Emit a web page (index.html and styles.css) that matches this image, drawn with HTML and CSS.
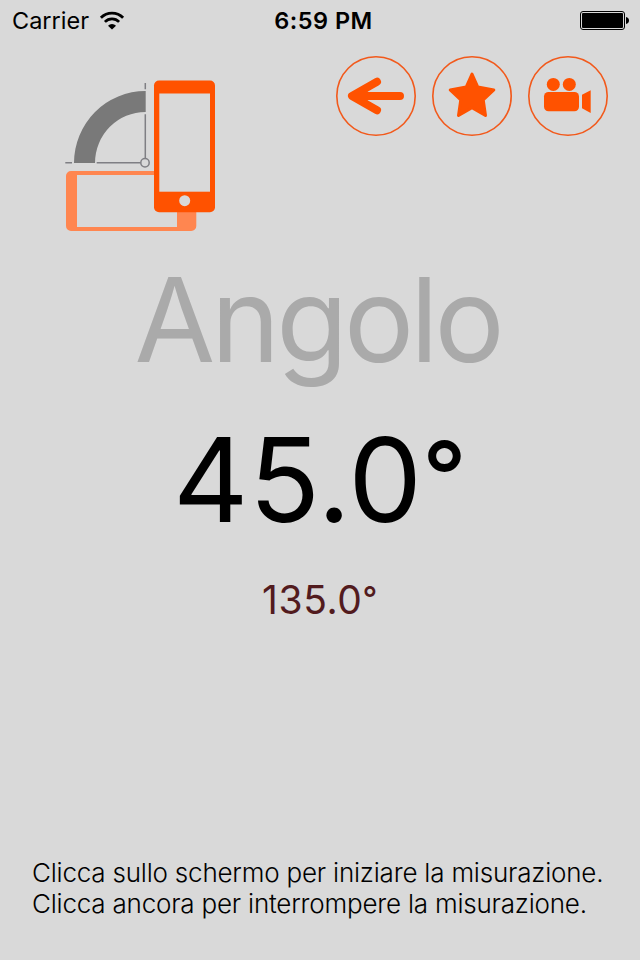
FILE: index.html
```html
<!DOCTYPE html>
<html lang="it">
<head>
    <meta charset="UTF-8">
    <meta name="viewport" content="width=device-width, initial-scale=1.0">
    <title>Angolo</title>
    <link rel="stylesheet" href="styles.css">
</head>
<body>
<div id="screen">
    <div class="status-bar">
        <div class="carrier">
            <span>Carrier</span>
            <svg class="wifi" width="26" height="20" viewBox="0 0 26 20">
                <path d="M1.9 6.8a15.6 15.6 0 0 1 22.2 0" fill="none" stroke="#000" stroke-width="2.8"/>
                <path d="M5.9 10.9a10 10 0 0 1 14.2 0" fill="none" stroke="#000" stroke-width="2.7"/>
                <path d="M13 18.6L9 14.7a5.6 5.6 0 0 1 8 0z"/>
            </svg>
        </div>
        <span class="time">6:59 PM</span>
        <svg class="battery" width="50" height="20" viewBox="0 0 50 20">
            <rect x="0.5" y="1.5" width="44" height="18" rx="2.5" fill="none" stroke="#000"/>
            <rect x="2" y="3" width="41" height="15" rx="1"/>
            <path d="M46 7c2 .3 3 1.6 3 3.5s-1 3.2-3 3.5z"/>
        </svg>
    </div>

    <div class="header">
        <svg class="logo" width="152" height="152" viewBox="0 0 152 152">
            <g fill="none" stroke="#7f7f84" stroke-width="1.5">
                <path d="M81.3 3v6.3M81.3 34.3v44M1.3 82.7H8M32.7 82.7h44"/>
                <circle cx="81" cy="82.8" r="4.2"/>
            </g>
            <path d="M10 83a71.5 72 0 0 1 71.7-72v21A50.5 51 0 0 0 31 83z" fill="#797979"/>
            <path d="M7 91h120a5 5 0 0 1 5.3 5v50a5 5 0 0 1-5 5H7a5 5 0 0 1-5-5V96a5 5 0 0 1 5-5zM13 95v52h100V95z" fill="#ff8650" fill-rule="evenodd"/>
            <rect x="90" y="0.5" width="61" height="131.7" rx="5" fill="#ff5200"/>
            <rect x="95.3" y="13.5" width="50.7" height="98.2" fill="#d9d9d9"/>
            <circle cx="120.7" cy="120.7" r="5.5" fill="#d9d9d9"/>
        </svg>

        <div class="buttons">
            <button type="button" aria-label="Indietro">
                <svg width="80" height="80" viewBox="0 0 80 80">
                    <circle class="ring" cx="40" cy="40" r="39.2"/>
                    <path d="M41 25.8L16 40l25 14.2M18 40h46M20 40l8-3v6z" fill="none" stroke="#ff5200" stroke-width="8" stroke-linecap="round" stroke-linejoin="round"/>
                </svg>
            </button>
            <button type="button" aria-label="Preferiti">
                <svg width="80" height="80" viewBox="0 0 80 80">
                    <circle class="ring" cx="40" cy="40" r="39.2"/>
                    <path d="M40 18l5.8 13 16 3-10.6 9.8 2.3 15.7L40 51.7l-13.5 7.8 2.3-15.7L18.2 34l16-3z" fill="#ff5200" stroke="#ff5200" stroke-width="3" stroke-linejoin="round"/>
                </svg>
            </button>
            <button type="button" aria-label="Video">
                <svg width="80" height="80" viewBox="0 0 80 80">
                    <circle class="ring" cx="40" cy="40" r="39.2"/>
                    <g fill="#ff5200">
                        <circle cx="25.3" cy="28.4" r="6.5"/>
                        <circle cx="41.3" cy="28.4" r="6.5"/>
                        <rect x="16" y="36" width="35" height="19.3" rx="4.5"/>
                        <path d="M54 38.8l8.7-4.5V57L54 52.3z"/>
                    </g>
                </svg>
            </button>
        </div>
    </div>

    <div class="measure">
        <h1>Angolo</h1>
        <div class="value">45.0<span class="deg">°</span></div>
        <div class="supplement">135.0<span class="deg">°</span></div>
    </div>

    <p class="hint">
        <span>Clicca sullo schermo per iniziare la misurazione.</span>
        <span>Clicca ancora per interrompere la misurazione.</span>
    </p>
</div>
</body>
</html>
```
FILE: styles.css
```css
body {
    margin: 0;
    background: #d9d9d9;
    font-family: Inter, "Liberation Sans", sans-serif;
    color: #000;
}

#screen {
    display: flex;
    flex-direction: column;
    box-sizing: border-box;
    width: 640px;
    height: 960px;
    padding-bottom: 41px;
    overflow: hidden;
}

.status-bar {
    display: grid;
    grid-template-columns: 1fr auto 1fr;
    align-items: center;
    height: 40px;
    padding: 1px 10px 0 12px;
    box-sizing: border-box;
    font-size: 23.5px;
    line-height: 40px;
}

.carrier {
    display: flex;
    align-items: center;
    gap: 10px;
}

.time {
    margin-left: 5px;
    font-weight: 600;
    font-size: 23.5px;
    letter-spacing: 0.5px;
}

.battery {
    justify-self: end;
    margin-top: -3px;
}

.header {
    display: flex;
    justify-content: space-between;
    align-items: flex-start;
    padding: 16px 32px 0 64px;
}

.logo {
    margin-top: 24px;
}

.buttons {
    display: flex;
    gap: 16px;
}

button {
    width: 80px;
    height: 80px;
    padding: 0;
    border: none;
    background: none;
}

button svg {
    display: block;
}

.ring {
    fill: none;
    stroke: #f2591b;
    stroke-width: 1.6;
}

.measure {
    display: flex;
    flex-direction: column;
    align-items: center;
    margin-top: 18px;
}

h1 {
    margin: 0;
    padding-right: 5px;
    color: #aaa;
    font-size: 117px;
    font-weight: 400;
    line-height: 140px;
    letter-spacing: -4px;
}

.value {
    margin-top: 20px;
    font-size: 117px;
    line-height: 140px;
    letter-spacing: 0.3px;
}

.supplement {
    margin-top: 26px;
    color: #521b1e;
    font-size: 39px;
    line-height: 48px;
    letter-spacing: 0.6px;
}

/* smaller, raised degree sign */
.deg {
    font-size: 0.83em;
    font-weight: 500;
    line-height: 0;
    vertical-align: 0.11em;
}

.hint {
    margin: auto 0 0 32px;
    font-size: 26px;
    font-weight: 300;
    line-height: 31px;
    letter-spacing: -0.21px;
}

.hint span {
    display: block;
    white-space: nowrap;
}
```
